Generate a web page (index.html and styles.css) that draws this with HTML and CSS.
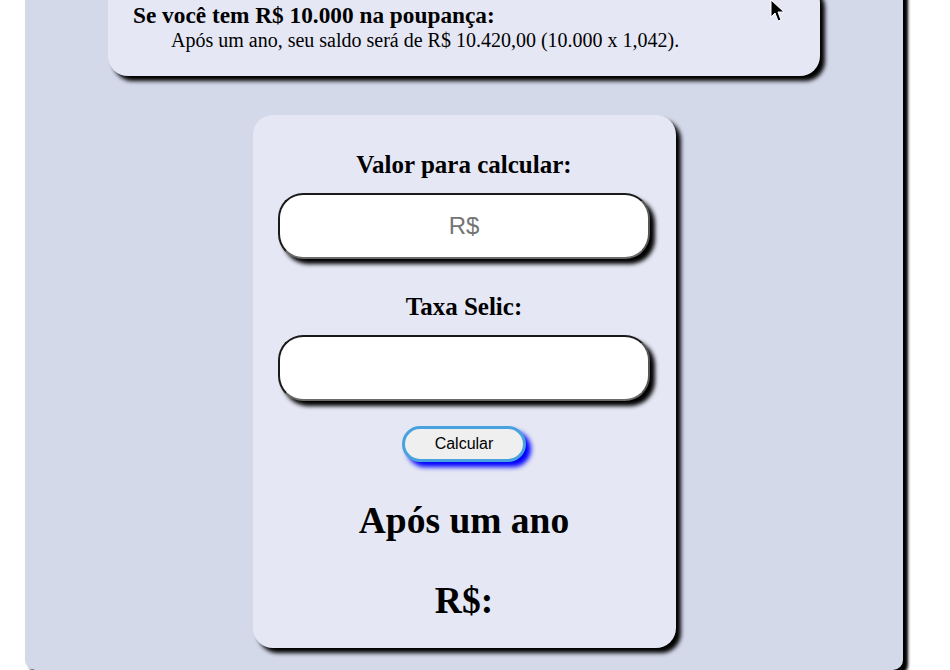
FILE: index.html
```html
<!DOCTYPE html>
<html lang="pt-BR">
<head>
<meta charset="utf-8">
<title>Calculadora Poupança</title>
<link rel="stylesheet" href="styles.css">
</head>
<body>
<main class="page">
  <section class="info-card">
    <h3 class="info-title">Se você tem R$ 10.000 na poupança:</h3>
    <p class="info-text">Após um ano, seu saldo será de R$ 10.420,00 (10.000 x 1,042).</p>
  </section>

  <section class="calc-card">
    <label class="field-label" for="valor">Valor para calcular:</label>
    <input class="field-input" id="valor" type="text" placeholder="R$">
    <label class="field-label second" for="selic">Taxa Selic:</label>
    <input class="field-input" id="selic" type="text">
    <button class="calc-btn" type="button">Calcular</button>
    <h1 class="result first">Após um ano</h1>
    <h1 class="result">R$:</h1>
  </section>
</main>
<svg class="cursor" width="16" height="24" viewBox="0 0 16 24">
  <path d="M1 0 L1 17 L5 13 L8 21 L11 20 L8 12 L14 12 Z" fill="#000" stroke="#fff" stroke-width="1"/>
</svg>
</body>
</html>
```
FILE: styles.css
```css
html, body {
  margin: 0;
  padding: 0;
  background: #ffffff;
  overflow: hidden;
}

body {
  font-family: "Liberation Serif", "Times New Roman", serif;
  color: #000;
}

.page {
  box-sizing: border-box;
  width: 878px;
  margin: -37px 0 0 25px;
  padding: 20px 0 22px;
  background: #d4d9ea;
  border-radius: 10px;
  box-shadow: 5px 5px 3px #000;
  display: flex;
  flex-direction: column;
  align-items: center;
}

.info-card {
  box-sizing: border-box;
  width: 712px;
  padding: 19px 25px 24px;
  background: #e5e7f4;
  border-radius: 20px;
  box-shadow: 5px 5px 4px #000;
}

.info-title {
  margin: 0;
  font-size: 23.3px;
  font-weight: bold;
}

.info-text {
  margin: 0 0 0 38px;
  font-size: 20px;
}

.calc-card {
  box-sizing: border-box;
  width: 423px;
  margin-top: 39px;
  padding: 36px 25px 26px;
  background: #e5e7f4;
  border-radius: 20px;
  box-shadow: 5px 5px 4px #000;
  display: flex;
  flex-direction: column;
  align-items: center;
}

.field-label {
  font-size: 25px;
  font-weight: bold;
  line-height: 28px;
}

.field-label.second {
  margin-top: 34px;
}

.field-input {
  box-sizing: border-box;
  width: 372px;
  height: 66px;
  margin-top: 14px;
  border: 2px solid;
  border-color: #1a1a1a #555 #6a6a6a #1a1a1a;
  border-radius: 25px;
  background: #fff;
  box-shadow: 5px 5px 4px #000;
  font-family: "Liberation Sans", Arial, sans-serif;
  font-size: 24px;
  text-align: center;
  outline: none;
}

.field-input::placeholder {
  color: #757575;
}

.calc-btn {
  box-sizing: border-box;
  width: 124px;
  height: 36px;
  margin-top: 25px;
  border: 3px solid #48a2de;
  border-radius: 18px;
  background: #efefef;
  box-shadow: 5px 5px 5px #0000ff;
  font-family: "Liberation Sans", Arial, sans-serif;
  font-size: 16px;
  color: #000;
}

.result {
  margin: 38px 0 0;
  font-size: 37.5px;
  line-height: 42px;
  font-weight: bold;
}

.cursor {
  position: absolute;
  left: 770px;
  top: 0;
}
```
